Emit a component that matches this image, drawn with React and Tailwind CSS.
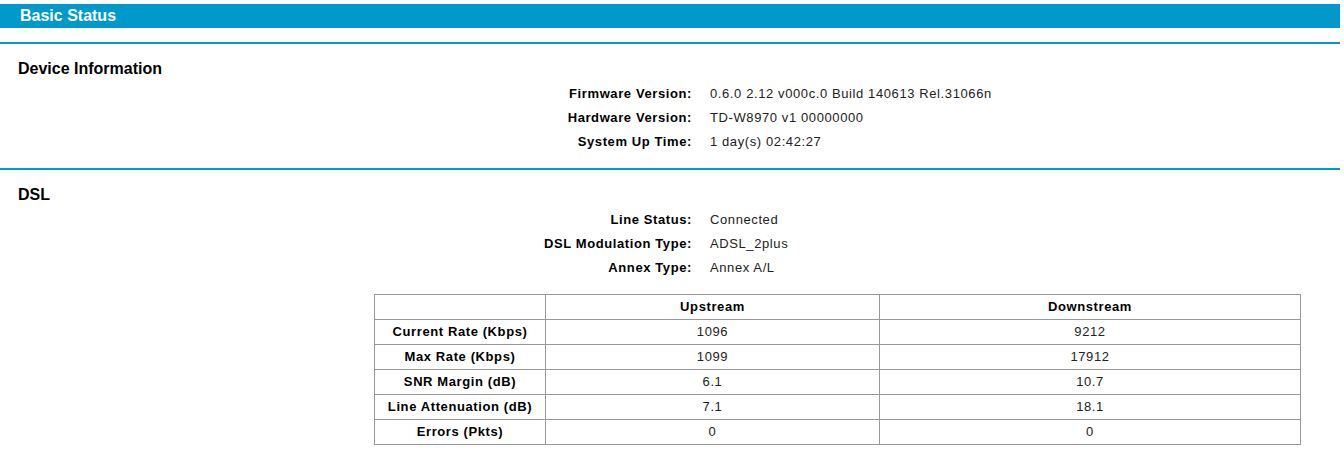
const device = [
  ['Firmware Version:', '0.6.0 2.12 v000c.0 Build 140613 Rel.31066n'],
  ['Hardware Version:', 'TD-W8970 v1 00000000'],
  ['System Up Time:', '1 day(s) 02:42:27'],
];

const dsl = [
  ['Line Status:', 'Connected'],
  ['DSL Modulation Type:', 'ADSL_2plus'],
  ['Annex Type:', 'Annex A/L'],
];

const rates = [
  ['Current Rate (Kbps)', '1096', '9212'],
  ['Max Rate (Kbps)', '1099', '17912'],
  ['SNR Margin (dB)', '6.1', '10.7'],
  ['Line Attenuation (dB)', '7.1', '18.1'],
  ['Errors (Pkts)', '0', '0'],
];

function InfoRows({ rows }) {
  return (
    <div className="grid grid-cols-[692px_1fr] gap-x-[18px] mt-px">
      {rows.map(([label, value]) => (
        <div key={label} className="contents">
          <div className="h-6 flex items-center justify-end font-bold text-black">{label}</div>
          <div className="h-6 flex items-center text-[#222]">{value}</div>
        </div>
      ))}
    </div>
  );
}

function Section({ title, children }) {
  return (
    <div className="border-t-2 border-[#0099cc] mt-[14px]">
      <h2 className="mt-[13px] h-6 flex items-center pl-[18px] text-[16px] font-bold tracking-normal text-black">
        {title}
      </h2>
      <div>{children}</div>
    </div>
  );
}

export default function App() {
  return (
    <div className="w-[1340px] pt-1 bg-white text-[13px] tracking-[0.6px] font-['Liberation_Sans',Arial,sans-serif]">
      <div className="h-6 bg-[#0099cc] flex items-center pl-5 text-[16px] font-bold tracking-normal text-white">
        Basic Status
      </div>

      <Section title="Device Information">
        <InfoRows rows={device} />
      </Section>

      <Section title="DSL">
        <InfoRows rows={dsl} />
        <table className="ml-[374px] mt-[14px] w-[927px] border-collapse border border-[#999] table-fixed">
          <colgroup>
            <col className="w-[171px]" />
            <col className="w-[334px]" />
            <col />
          </colgroup>
          <thead>
            <tr className="h-[25px] font-bold text-black">
              <td className="border border-[#999] text-center"></td>
              <td className="border border-[#999] text-center">Upstream</td>
              <td className="border border-[#999] text-center">Downstream</td>
            </tr>
          </thead>
          <tbody>
            {rates.map(([label, up, down]) => (
              <tr key={label} className="h-[25px]">
                <td className="border border-[#999] text-center font-bold text-black">{label}</td>
                <td className="border border-[#999] text-center text-[#222]">{up}</td>
                <td className="border border-[#999] text-center text-[#222]">{down}</td>
              </tr>
            ))}
          </tbody>
        </table>
      </Section>
    </div>
  );
}
